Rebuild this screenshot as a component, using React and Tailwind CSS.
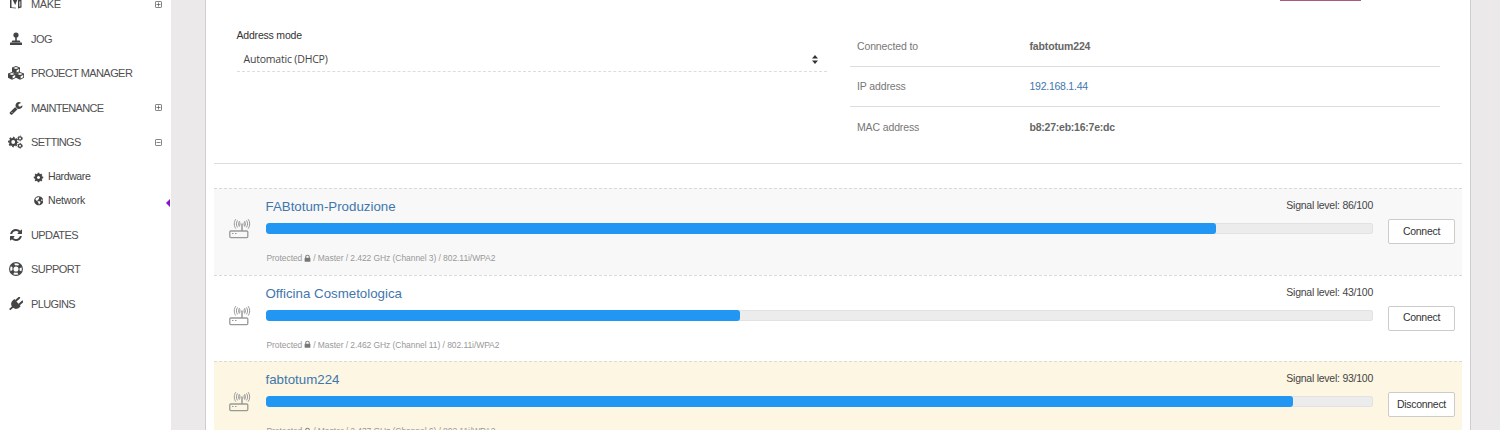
import { FaGlobeAmericas } from "react-icons/fa";

const PATHS = {
  cog: "M1152 896q0-106-75-181t-181-75-181 75-75 181 75 181 181 75 181-75 75-181zm512-109v222q0 12-8 23t-20 13l-185 28q-19 54-39 91 35 50 107 138 10 12 10 25t-9 23q-27 37-99 108t-94 71q-12 0-26-9l-138-108q-44 23-91 38-16 136-29 186-7 28-36 28h-222q-14 0-24.5-8.5t-11.5-21.5l-28-184q-49-16-90-37l-141 107q-10 9-25 9-14 0-25-11-126-114-165-168-7-10-7-23 0-12 8-23 15-21 51-66.5t54-70.5q-27-50-41-99l-183-27q-13-2-21-12.5t-8-23.5v-222q0-12 8-23t19-13l186-28q14-46 39-92-40-57-107-138-10-12-10-24 0-10 9-23 26-36 98.5-107.5t94.5-71.5q13 0 26 10l138 107q44-23 91-38 16-136 29-186 7-28 36-28h222q14 0 24.5 8.5t11.5 21.5l28 184q49 16 90 37l142-107q9-9 24-9 13 0 25 10 129 119 165 170 7 8 7 22 0 12-8 23-15 21-51 66.5t-54 70.5q26 50 41 98l183 28q13 2 21 12.5t8 23.5z",
  refresh: "M1639 1056q0 5-1 7-64 268-268 434.5t-478 166.5q-146 0-282.5-55t-243.5-157l-129 129q-19 19-45 19t-45-19-19-45v-448q0-26 19-45t45-19h448q26 0 45 19t19 45-19 45l-137 137q71 66 161 102t187 36q134 0 250-65t186-179q11-17 53-117 8-23 30-23h192q13 0 22.5 9.5t9.5 22.5zm25-800v448q0 26-19 45t-45 19h-448q-26 0-45-19t-19-45 19-45l138-138q-148-137-349-137-134 0-250 65t-186 179q-11 17-53 117-8 23-30 23h-199q-13 0-22.5-9.5t-9.5-22.5v-7q65-268 270-434.5t480-166.5q146 0 284 55.5t245 156.5l130-129q19-19 45-19t45 19 19 45z",
  wrench: "M448 1472q0-26-19-45t-45-19-45 19-19 45 19 45 45 19 45-19 19-45zm644-420l-682 682q-37 37-90 37-52 0-91-37l-106-108q-38-36-38-90 0-53 38-91l681-681q39 98 114.5 173.5t173.5 114.5zm634-435q0 39-23 106-47 134-164.5 217.5t-258.5 83.5q-185 0-316.5-131.5t-131.5-316.5 131.5-316.5 316.5-131.5q58 0 121.5 16.5t107.5 46.5q16 11 16 28t-16 28l-293 169v224l193 107q5-3 79-48.5t135.5-81 70.5-35.5q15 0 23.5 10t8.5 25z",
  lock: "M640 768h512v-192q0-106-75-181t-181-75-181 75-75 181v192zm832 96v576q0 40-28 68t-68 28h-960q-40 0-68-28t-28-68v-576q0-40 28-68t68-28h32v-192q0-184 132-316t316-132 316 132 132 316v192h32q40 0 68 28t28 68z",
};

function Glyph({ name, className }) {
  return (
    <svg viewBox="0 0 1792 1792" fill="currentColor" className={className}>
      <path d={PATHS[name]} />
    </svg>
  );
}

function MakeIcon() {
  return (
    <svg viewBox="0 0 16 16" className="size-4 shrink-0" fill="currentColor">
      <path d="M2 3.500h1.500V12H2z" />
      <path d="M4.300 3h5.400L7.200 9z" />
      <path d="M3 11.500l5 .6" fill="none" stroke="currentColor" strokeWidth=".7" />
      <path d="M10 4h3.500v7.500L10 12.600z" />
      <path d="M11.400 5.500l.9-.3v5l-.9.5z" fill="white" />
    </svg>
  );
}

function JoystickIcon() {
  return (
    <svg viewBox="0 0 14 14" className="size-3.5 shrink-0" fill="currentColor">
      <circle cx="7" cy="3" r="2.600" />
      <path d="M6.200 5h1.600v4.200H6.200z" />
      <path d="M3.400 8.600h7.200l1 2H2.400z" />
      <path d="M1 10.600h12v2.400H1z" />
    </svg>
  );
}

function Cube({ x, y }) {
  return (
    <g transform={`translate(${x} ${y})`}>
      <path d="M4 0 8 1.600v4.100L4 7.700 0 5.700V1.600z" fill="currentColor" />
      <path d="M4 .9 6.700 2 4 3.100 1.300 2zM4.600 4.200 7.200 3.100v2.200L4.600 6.500z" fill="white" />
    </g>
  );
}

function CubesIcon() {
  return (
    <svg viewBox="0 0 16 14" className="h-3.5 w-4 shrink-0">
      <Cube x={4} y={0} />
      <Cube x={0} y={6} />
      <Cube x={8} y={6} />
    </svg>
  );
}

function CogsIcon() {
  return (
    <svg viewBox="0 0 15 14" className="h-3.5 w-[15px] shrink-0" fill="none" stroke="currentColor">
      <circle cx="5.200" cy="7" r="3" strokeWidth="2.200" />
      <circle cx="5.200" cy="7" r="4.500" strokeWidth="1.400" strokeDasharray="1.770 1.764" strokeDashoffset=".88" />
      <circle cx="12" cy="3.400" r="1.600" strokeWidth="1.200" />
      <circle cx="12" cy="3.400" r="2.400" strokeWidth=".8" strokeDasharray="1.257 1.256" />
      <circle cx="12" cy="10.800" r="1.600" strokeWidth="1.200" />
      <circle cx="12" cy="10.800" r="2.400" strokeWidth=".8" strokeDasharray="1.257 1.256" />
    </svg>
  );
}

function LifeRing() {
  return (
    <svg viewBox="0 0 14 14" className="size-3.5 shrink-0" fill="none" stroke="currentColor">
      <circle cx="7" cy="7" r="6.400" strokeWidth="1.100" />
      <circle cx="7" cy="7" r="3.100" strokeWidth="1.100" />
      <circle cx="7" cy="7" r="4.800" strokeWidth="3" strokeDasharray="3.400 4.140" strokeDashoffset="-2.070" />
    </svg>
  );
}

function PlugIcon() {
  return (
    <svg viewBox="0 0 14 14" className="size-3.5 shrink-0">
      <g transform="rotate(48 7 7)" fill="currentColor">
        <path d="M2.200 5h9.600v1.800c0 2.900-1.600 4.500-3.900 4.900V15.500H6.100v-3.800C3.800 11.300 2.200 9.700 2.200 6.800z" />
        <rect x="3.500" y="-.5" width="2" height="6" rx=".9" />
        <rect x="8.500" y="-.5" width="2" height="6" rx=".9" />
      </g>
    </svg>
  );
}

function Toggle({ open }) {
  return (
    <svg viewBox="0 0 7 7" className="mr-px size-[7px] text-[#666]" fill="none" stroke="currentColor">
      <rect x=".5" y=".5" width="6" height="6" rx=".6" strokeWidth=".8" />
      <path d={open ? "M1.500 3.500h4" : "M1.500 3.500h4M3.500 1.500v4"} strokeWidth=".8" />
    </svg>
  );
}

function NavItem({ icon, label, toggle, spacing }) {
  return (
    <div className="flex h-[34.5px] items-center pr-2 pl-[7px]">
      <span className="flex w-[17px] justify-center text-[#444]">{icon}</span>
      <span className={`ml-[7px] flex-1 whitespace-nowrap text-[11px] text-[#505050] ${spacing}`}>{label}</span>
      {toggle && <Toggle open={toggle === "open"} />}
    </div>
  );
}

function SubItem({ icon, label, spacing }) {
  return (
    <div className="flex h-[23.5px] items-center pl-[33px]">
      <span className="flex w-[11px] justify-center text-[#444]">{icon}</span>
      <span className={`ml-[4px] text-[10.5px] ${spacing}`}>{label}</span>
    </div>
  );
}

function RouterIcon() {
  return (
    <svg viewBox="0 0 22 21" className="h-[21px] w-[22px] text-[#999]" fill="none" stroke="currentColor">
      <rect x=".8" y="13" width="18" height="6.600" rx="1" strokeWidth="1.300" />
      <path d="M3 15.500h1.500M6 15.500h1.500" strokeWidth="1" />
      <path d="M13 5.500V13" strokeWidth="1.500" />
      <path d="M10.300 3.400c.9 1.200.9 3.800 0 5M8.500 2.400c-1.400 1.800-1.400 5.200 0 7M6.800 1.200C4.800 3.600 4.800 8.200 6.800 10.600M10.300 3.400c-.9 1.200-.9 3.800 0 5M15.700 3.400c.9 1.200.9 3.800 0 5M17.500 2.400c1.400 1.800 1.400 5.200 0 7M19.200 1.200c2 2.400 2 7 0 9.400M15.700 3.400c-.9 1.200-.9 3.800 0 5" strokeWidth="1" />
    </svg>
  );
}

function NetworkRow({ name, level, info, bg, action }) {
  return (
    <div className={`flex h-[86.5px] shrink-0 border-t border-dashed border-[#d9d9d9] ${bg}`}>
      <div className="w-[51.5px] shrink-0 pt-[29px] pl-[15px]">
        <RouterIcon />
      </div>
      <div className="flex-1">
        <div className="flex h-[34px] justify-between">
          <span className="pt-[9px] text-[13.3px] leading-[18px] text-[#3f76ad]">{name}</span>
          <span className="pt-2 text-[10.5px] leading-4 tracking-[-0.25px] text-[#444]">Signal level: {level}/100</span>
        </div>
        <div className="h-[11px] overflow-hidden rounded-[3px] bg-[#ececec] shadow-[inset_0_0_0_1px_#e2e2e2]">
          <div className="h-full rounded-[3px] bg-[#2196f3]" style={{ width: `${level - 0.2}%` }} />
        </div>
        <div className="mt-[18px] flex items-center pl-px text-[8.5px] leading-3 tracking-[-0.07px] whitespace-pre text-[#999]">
          <span>Protected</span>
          <Glyph name="lock" className="mx-px size-[9px] text-[#777]" />
          <span>/ {info}</span>
        </div>
      </div>
      <div className="ml-[15px] w-[74px] pt-[30px]">
        <button className="flex h-[25px] w-[67px] items-center justify-center rounded-[2px] border border-[#ccc] bg-white text-[10.5px] tracking-[-0.3px] whitespace-nowrap text-[#333]">
          {action}
        </button>
      </div>
    </div>
  );
}

function InfoRow({ label, value, valueClass, border }) {
  return (
    <div className={`flex h-[40.5px] items-center pt-[2px] pl-[7.5px] text-[10.5px] ${border}`}>
      <span className="w-[172.5px] tracking-[-0.13px] text-[#777]">{label}</span>
      <span className={valueClass}>{value}</span>
    </div>
  );
}

export default function App() {
  return (
    <div className="flex h-[430px] w-[1500px] overflow-hidden bg-[#ece9ea] font-['Liberation_Sans',Arial,sans-serif] text-[#444]">
      <aside className="relative w-[171px] shrink-0 overflow-hidden bg-white">
        <nav className="-mt-[13px]">
          <NavItem icon={<MakeIcon />} label="MAKE" toggle="closed" spacing="tracking-[-0.4px]" />
          <NavItem icon={<JoystickIcon />} label="JOG" spacing="tracking-[-0.5px]" />
          <NavItem icon={<CubesIcon />} label="PROJECT MANAGER" spacing="tracking-[-0.57px]" />
          <NavItem icon={<Glyph name="wrench" className="size-[14px]" />} label="MAINTENANCE" toggle="closed" spacing="tracking-[-0.7px]" />
          <NavItem icon={<CogsIcon />} label="SETTINGS" toggle="open" spacing="tracking-[-0.67px]" />
          <div className="pt-[6px] pb-[5px]">
            <SubItem icon={<Glyph name="cog" className="size-[11px]" />} label="Hardware" spacing="tracking-[-0.4px]" />
            <SubItem icon={<FaGlobeAmericas className="size-[9.5px]" />} label="Network" spacing="tracking-[-0.2px]" />
          </div>
          <NavItem icon={<Glyph name="refresh" className="size-[14px]" />} label="UPDATES" spacing="tracking-[-0.6px]" />
          <NavItem icon={<LifeRing />} label="SUPPORT" spacing="tracking-[-0.55px]" />
          <NavItem icon={<PlugIcon />} label="PLUGINS" spacing="tracking-[-0.6px]" />
        </nav>
        <svg viewBox="0 0 4 8" className="absolute top-[199px] right-[1px] h-2 w-1">
          <path d="M4 0v8L0 4z" fill="#8a12c9" />
        </svg>
      </aside>

      <main className="relative ml-[34px] flex w-[1266px] flex-col border-x border-[#cfcdce] bg-white px-2">
        <div className="absolute top-0 left-[1074px] h-px w-[81px] bg-[#b0567f]" />
        <section className="flex h-[164px] shrink-0 border-b border-[#ddd] pl-[22.5px]">
          <div className="w-[590px] pt-7">
            <div className="text-[10.5px] leading-[14px] tracking-[-0.2px] text-[#333]">Address mode</div>
            <div className="mt-[6px] flex h-6 items-center justify-between border-b border-dashed border-[#ddd] pr-[9px] pl-[7px] font-['Open_Sans',sans-serif] text-[10.5px] tracking-[-0.2px] text-[#444]">
              <span>Automatic (DHCP)</span>
              <svg viewBox="0 0 6 9" className="h-[9px] w-[6px]" fill="#333">
                <path d="M3 0 6 3.500H0zM3 9 0 5.500h6z" />
              </svg>
            </div>
          </div>
          <div className="ml-[23px] w-[590px] pt-[26px]">
            <InfoRow label="Connected to" value="fabtotum224" valueClass="font-bold text-[#666] tracking-[-0.15px]" border="border-b border-[#ddd]" />
            <InfoRow label="IP address" value="192.168.1.44" valueClass="text-[#3f76ad] tracking-[-0.25px]" border="border-b border-[#ddd]" />
            <InfoRow label="MAC address" value="b8:27:eb:16:7e:dc" valueClass="font-bold text-[#666] tracking-[-0.23px]" border="" />
          </div>
        </section>
        <section className="flex flex-col pt-6">
          <NetworkRow name="FABtotum-Produzione" level={86} info="Master / 2.422 GHz (Channel 3) / 802.11i/WPA2" bg="bg-[#f8f8f8]" action="Connect" />
          <NetworkRow name="Officina Cosmetologica" level={43} info="Master / 2.462 GHz (Channel 11) / 802.11i/WPA2" bg="bg-white" action="Connect" />
          <NetworkRow name="fabtotum224" level={93} info="Master / 2.437 GHz (Channel 6) / 802.11i/WPA2" bg="bg-[#fcf6e2]" action="Disconnect" />
        </section>
      </main>
    </div>
  );
}
